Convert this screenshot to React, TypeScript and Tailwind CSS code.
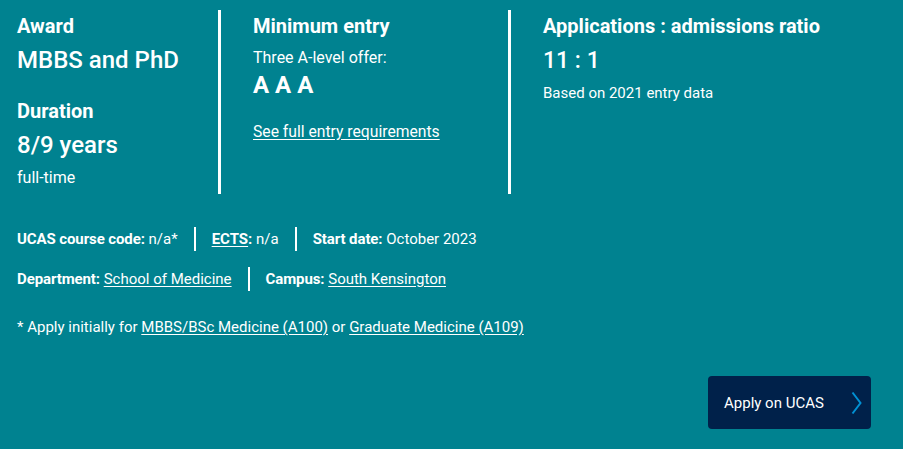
import { Fragment } from 'react';

type Fact = { label: string; value: string; abbr?: boolean; link?: boolean };

const FACT_ROWS: Fact[][] = [
  [
    { label: 'UCAS course code:', value: 'n/a*' },
    { label: 'ECTS', value: 'n/a', abbr: true },
    { label: 'Start date:', value: 'October 2023' },
  ],
  [
    { label: 'Department:', value: 'School of Medicine', link: true },
    { label: 'Campus:', value: 'South Kensington', link: true },
  ],
];

function FactRow({ facts, className }: { facts: Fact[]; className: string }) {
  return (
    <div className={`flex items-stretch text-[15px] leading-[24px] ${className}`}>
      {facts.map((fact, index) => (
        <Fragment key={fact.label}>
          {index > 0 && <div className="w-[2px] mx-4 bg-white" />}
          <p>
            {fact.abbr ? (
              <>
                <span className="font-bold underline underline-offset-2">{fact.label}</span>
                <span className="font-bold">:</span>
              </>
            ) : (
              <span className="font-bold tracking-[-0.1px]">{fact.label}</span>
            )}{' '}
            {fact.link ? (
              <a href="#" className="underline underline-offset-2">
                {fact.value}
              </a>
            ) : (
              fact.value
            )}
          </p>
        </Fragment>
      ))}
    </div>
  );
}

export default function App() {
  return (
    <div className="w-[903px] h-[449px] bg-[#008290] text-white font-[Roboto,sans-serif] pl-[17px] pr-[32px] pt-[10px]">
      {/* Key facts */}
      <div className="flex h-[184px]">
        <div className="w-[201px]">
          <h3 className="mt-1 text-[20px] leading-[24px] font-bold">Award</h3>
          <p className="mt-[6px] text-[24px] leading-[32px] font-medium">MBBS and PhD</p>
          <h3 className="mt-[23px] text-[20px] leading-[24px] font-bold">Duration</h3>
          <p className="mt-[6px] text-[24px] leading-[32px] font-medium">8/9 years</p>
          <p className="mt-[7px] text-[16px] leading-[20px]">full-time</p>
        </div>

        <div className="w-[290px] border-l-[3px] border-white pl-[32px]">
          <h3 className="mt-1 text-[20px] leading-[24px] font-bold">Minimum entry</h3>
          <p className="mt-[10px] text-[16px] leading-[20px]">Three A-level offer:</p>
          <p className="mt-[1px] text-[24px] leading-[32px] font-bold">A A A</p>
          <a href="#" className="block mt-[21px] text-[15.7px] leading-[20px] underline underline-offset-2">
            See full entry requirements
          </a>
        </div>

        <div className="flex-1 border-l-[3px] border-white pl-[32px]">
          <h3 className="mt-1 text-[20px] leading-[24px] font-bold">Applications : admissions ratio</h3>
          <p className="mt-[7px] text-[23px] leading-[32px] font-medium">11 : 1</p>
          <p className="mt-[6px] text-[15px] leading-[20px]">Based on 2021 entry data</p>
        </div>
      </div>

      {/* Course details */}
      <FactRow facts={FACT_ROWS[0]} className="mt-[33px]" />
      <FactRow facts={FACT_ROWS[1]} className="mt-4" />

      <p className="mt-6 text-[15px] leading-[24px]">
        * Apply initially for{' '}
        <a href="#" className="underline underline-offset-2">
          MBBS/BSc Medicine (A100)
        </a>{' '}
        or{' '}
        <a href="#" className="underline underline-offset-2">
          Graduate Medicine (A109)
        </a>
      </p>

      {/* Apply button */}
      <div className="flex justify-end mt-[37px]">
        <a
          href="#"
          className="w-[163px] h-[53px] rounded bg-[#00214a] flex items-center justify-between pl-4 pr-[9px] text-[15px] leading-[20px]"
        >
          <span>Apply on UCAS</span>
          <svg width="11" height="24" viewBox="0 0 11 24" fill="none">
            <path d="M1.5 1.5 L9.5 12 L1.5 22.5" stroke="#0091d4" strokeWidth="2" />
          </svg>
        </a>
      </div>
    </div>
  );
}
